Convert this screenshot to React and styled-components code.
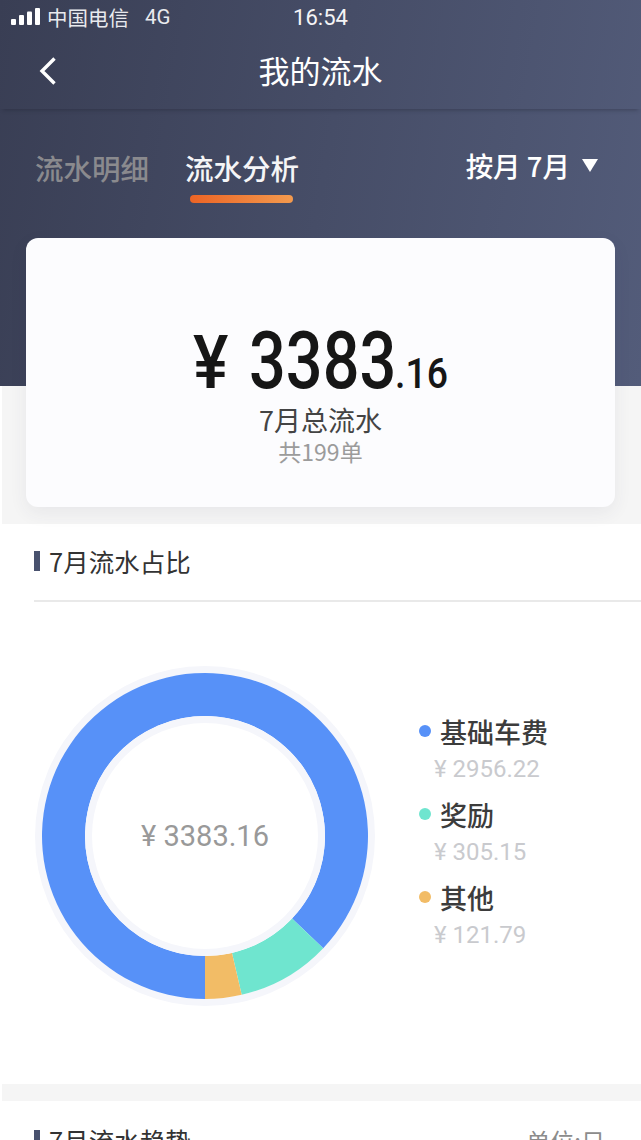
import React from 'react';
import styled, { createGlobalStyle } from 'styled-components';

const CJK = '"Noto Sans CJK SC", "Noto Sans", sans-serif';
const DIGITS = 'Roboto, "Noto Sans CJK SC", sans-serif';

const GlobalStyle = createGlobalStyle`
  html, body {
    margin: 0;
    padding: 0;
    background: #fff;
    overflow: hidden;
  }
  * {
    box-sizing: border-box;
  }
`;

const segments = [
  { name: '基础车费', amount: '2956.22', color: '#5791f8', from: 180, to: 493.5 },
  { name: '奖励', amount: '305.15', color: '#6fe5cf', from: 133.5, to: 167 },
  { name: '其他', amount: '121.79', color: '#f2bc66', from: 167, to: 180 },
];

const point = (r, deg) => {
  const rad = (deg * Math.PI) / 180;
  return [170 + r * Math.sin(rad), 170 - r * Math.cos(rad)];
};

const arcPath = (r0, r1, from, to) => {
  const large = to - from > 180 ? 1 : 0;
  const [ax, ay] = point(r1, from);
  const [bx, by] = point(r1, to);
  const [cx, cy] = point(r0, to);
  const [dx, dy] = point(r0, from);
  return `M${ax} ${ay}A${r1} ${r1} 0 ${large} 1 ${bx} ${by}L${cx} ${cy}A${r0} ${r0} 0 ${large} 0 ${dx} ${dy}Z`;
};

const App = () => (
  <Page>
    <GlobalStyle />
    <Hero>
      <StatusBar>
        <Carrier>
          <svg width="29" height="18" viewBox="0 0 29 18">
            <rect x="0" y="11" width="5" height="6" rx="1" fill="#fff" />
            <rect x="8" y="7" width="5" height="10" rx="1" fill="#fff" />
            <rect x="16" y="3.5" width="5" height="13.5" rx="1" fill="#fff" />
            <rect x="24" y="0" width="5" height="17" rx="1" fill="#fff" />
          </svg>
          <CarrierName>中国电信</CarrierName>
          <Network>4G</Network>
        </Carrier>
        <Clock>16:54</Clock>
      </StatusBar>
      <NavBar>
        <BackButton>
          <svg width="18" height="30" viewBox="0 0 18 30" fill="none">
            <path d="M15.5 2.5 3 15l12.5 12.5" stroke="#fff" strokeWidth="3.4" />
          </svg>
        </BackButton>
        <NavTitle>我的流水</NavTitle>
      </NavBar>
      <TabRow>
        <Tab>流水明细</Tab>
        <Tab $active>流水分析</Tab>
        <MonthPicker>
          按月 7月
          <Caret />
        </MonthPicker>
      </TabRow>
    </Hero>

    <SummaryBand>
      <SummaryCard>
        <Total>
          <Yen>¥</Yen>
          <Whole>3383</Whole>
          <Cents>.16</Cents>
        </Total>
        <TotalLabel>7月总流水</TotalLabel>
        <OrderCount>共199单</OrderCount>
      </SummaryCard>
    </SummaryBand>

    <Section>
      <SectionHeader>
        <SectionTitle>7月流水占比</SectionTitle>
      </SectionHeader>
      <ChartRow>
        <Donut>
          <svg width="340" height="340" viewBox="0 0 340 340">
            <circle cx="170" cy="170" r="170" fill="#f5f6fb" />
            <circle cx="170" cy="170" r="163" fill="#fff" />
            {segments.map((s) => (
              <path key={s.name} d={arcPath(120, 163, s.from, s.to)} fill={s.color} />
            ))}
            <circle cx="170" cy="170" r="120" fill="#f5f6fb" />
            <circle cx="170" cy="170" r="113" fill="#fff" />
          </svg>
          <DonutLabel>¥ 3383.16</DonutLabel>
        </Donut>
        <Legend>
          {segments.map((s) => (
            <LegendItem key={s.name}>
              <LegendName>
                <Dot $color={s.color} />
                {s.name}
              </LegendName>
              <LegendAmount>¥ {s.amount}</LegendAmount>
            </LegendItem>
          ))}
        </Legend>
      </ChartRow>
    </Section>

    <Gap />

    <Section>
      <TrendHeader>
        <SectionTitle>7月流水趋势</SectionTitle>
        <Unit>单位:日</Unit>
      </TrendHeader>
    </Section>
  </Page>
);

const Page = styled.div`
  width: 641px;
  height: 1140px;
  overflow: hidden;
  background: #fff;
  font-family: ${CJK};
`;

const Hero = styled.header`
  height: 386px;
  color: #fff;
  background: linear-gradient(100deg, #393e54 0%, #535c7a 100%);
`;

const StatusBar = styled.div`
  display: grid;
  grid-template-columns: 1fr auto 1fr;
  align-items: center;
  height: 34px;
  padding: 0 11px;
`;

const Carrier = styled.div`
  display: flex;
  align-items: center;
  font-size: 20.5px;
  color: #e9eaee;
`;

const CarrierName = styled.span`
  margin-left: 7px;
`;

const Network = styled.span`
  margin-left: 16px;
  font-family: ${DIGITS};
`;

const Clock = styled.span`
  font-family: ${DIGITS};
  font-size: 22px;
  color: #f4f4f6;
`;

const NavBar = styled.nav`
  position: relative;
  display: flex;
  align-items: center;
  justify-content: center;
  height: 75px;
  box-shadow: 0 4px 4px -3px rgba(30, 33, 48, 0.4);
`;

const BackButton = styled.span`
  position: absolute;
  left: 39px;
  top: 22px;
  display: flex;
`;

const NavTitle = styled.h1`
  margin: 0 0 5px;
  font-size: 31px;
  font-weight: 400;
  line-height: 1;
`;

const TabRow = styled.div`
  display: flex;
  align-items: flex-start;
  padding: 42px 43px 0 35px;
`;

const Tab = styled.div`
  position: relative;
  margin-right: 36px;
  font-size: 28.5px;
  font-weight: 500;
  line-height: 34px;
  color: ${(p) => (p.$active ? '#f5f5f7' : '#8a8a8e')};

  ${(p) =>
    p.$active &&
    `
    &::after {
      content: '';
      position: absolute;
      left: 5px;
      right: 6px;
      top: 44px;
      height: 8px;
      border-radius: 4px;
      background: linear-gradient(90deg, #ec6425, #f39a4e);
    }
  `}
`;

const MonthPicker = styled.div`
  display: flex;
  align-items: center;
  margin-left: auto;
  margin-top: -3px;
  font-size: 27.5px;
  font-weight: 500;
  line-height: 34px;
  white-space: pre;
`;

const Caret = styled.i`
  width: 0;
  height: 0;
  margin-left: 12px;
  border-left: 8px solid transparent;
  border-right: 8px solid transparent;
  border-top: 13px solid #fff;
`;

const SummaryBand = styled.div`
  display: flow-root;
  height: 138px;
  margin-left: 2px;
  padding: 0 26px 0 24px;
  background: #f5f5f5;
`;

const SummaryCard = styled.div`
  position: relative;
  display: flex;
  flex-direction: column;
  align-items: center;
  height: 269px;
  margin-top: -148px;
  padding-top: 83px;
  border-radius: 12px;
  background: #fcfcfe;
  box-shadow: 0 6px 18px rgba(60, 60, 80, 0.07);
`;

const Total = styled.div`
  display: flex;
  align-items: baseline;
  height: 83px;
  color: #161616;
  font-family: ${DIGITS};
  font-weight: 500;
  line-height: 1;
`;

const Squeezed = styled.span`
  display: inline-block;
  transform-origin: left center;
  white-space: nowrap;
`;

const Yen = styled(Squeezed)`
  width: 38px;
  margin-right: 18px;
  font-size: 74px;
  transform: scaleX(0.9);
`;

const Whole = styled(Squeezed)`
  width: 144px;
  font-size: 80px;
  transform: scaleX(0.81);
`;

const Cents = styled(Squeezed)`
  width: 54px;
  margin-left: 2px;
  font-size: 42px;
  transform: scaleX(0.89);
`;

const TotalLabel = styled.div`
  font-size: 27px;
  line-height: 32px;
  color: #444;
`;

const OrderCount = styled.div`
  font-size: 23px;
  line-height: 30px;
  color: #9b9b9b;
`;

const Section = styled.section`
  background: #fff;
`;

const SectionHeader = styled.div`
  display: flex;
  align-items: center;
  height: 78px;
  margin-left: 34px;
  padding-bottom: 2px;
  border-bottom: 2px solid #e9e9e9;
`;

const TrendHeader = styled.div`
  display: flex;
  align-items: center;
  justify-content: space-between;
  height: 78px;
  margin-left: 34px;
  padding-right: 36px;
`;

const SectionTitle = styled.h2`
  display: flex;
  align-items: center;
  margin: 0;
  font-size: 25.5px;
  font-weight: 400;
  line-height: 1;
  color: #333;

  &::before {
    content: '';
    width: 6px;
    height: 20px;
    margin-right: 9px;
    background: #49526e;
  }
`;

const Unit = styled.span`
  font-size: 24px;
  color: #8c8c8c;
`;

const ChartRow = styled.div`
  display: flex;
  align-items: center;
  padding: 64px 0 78px 35px;
`;

const Donut = styled.div`
  position: relative;
  display: flex;
  width: 340px;
  height: 340px;
`;

const DonutLabel = styled.div`
  position: absolute;
  inset: 0;
  display: flex;
  align-items: center;
  justify-content: center;
  font-family: ${DIGITS};
  font-size: 29px;
  color: #999;
`;

const Legend = styled.div`
  display: flex;
  flex-direction: column;
  gap: 8px;
  margin: 0 0 6px 44px;
`;

const LegendItem = styled.div`
  display: flex;
  flex-direction: column;
`;

const LegendName = styled.div`
  display: flex;
  align-items: center;
  font-size: 27px;
  font-weight: 500;
  line-height: 37px;
  color: #3c3c3c;
`;

const Dot = styled.i`
  width: 12px;
  height: 12px;
  margin-right: 9px;
  border-radius: 50%;
  background: ${(p) => p.$color};
`;

const LegendAmount = styled.div`
  margin: 1px 0 0 15px;
  font-family: ${DIGITS};
  font-size: 24px;
  line-height: 37px;
  color: #c9cace;
`;

const Gap = styled.div`
  height: 17px;
  margin-left: 2px;
  background: #f5f5f5;
`;

export default App;
